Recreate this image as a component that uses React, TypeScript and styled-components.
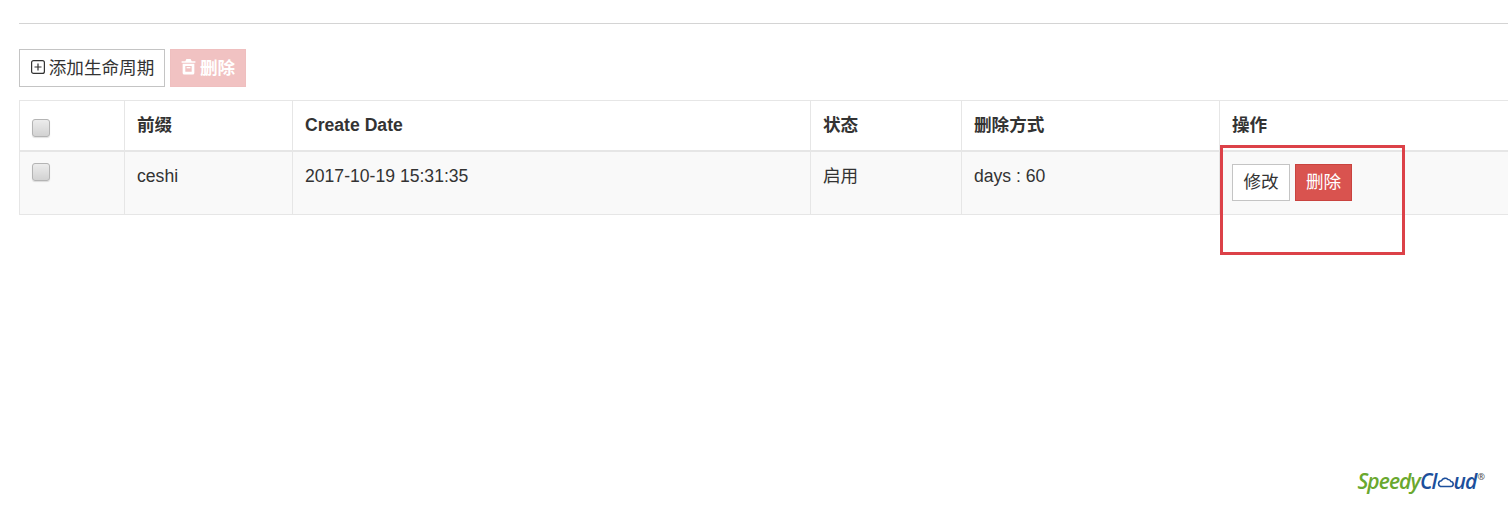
import * as React from 'react';
import styled, {createGlobalStyle} from 'styled-components'

const FONT = `"Helvetica Neue", "Liberation Sans", "Noto Sans CJK SC", sans-serif`

const GlobalStyle = createGlobalStyle`
  html, body {
    margin: 0;
    padding: 0;
    background: #fff;
    overflow: hidden;
  }
  body {
    font-family: ${FONT};
    font-size: 17.6px;
    color: #333;
  }
`
const Page = styled.div`
  position: relative;
  width: 1508px;
  height: 509px;
  overflow: hidden;
  padding: 23px 0 0 19px;
  box-sizing: border-box;
  display: flex;
  flex-direction: column;
`
const Rule = styled.div`
  height: 1px;
  background: #d4d4d4;
  margin-bottom: 25px;
`
const Toolbar = styled.div`
  display: flex;
  gap: 5px;
  height: 38px;
  margin-bottom: 13px;
`
const Button = styled.button`
  display: inline-flex;
  align-items: center;
  justify-content: center;
  gap: 3px;
  box-sizing: border-box;
  padding: 0 0 3px;
  height: 38px;
  border-radius: 0;
  font-family: ${FONT};
  font-size: 17.6px;
`
const AddButton = styled(Button)`
  width: 146px;
  background: #fff;
  color: #333;
  border: 1px solid #c4c4c4;
`
const DisabledButton = styled(Button)`
  width: 76px;
  gap: 4px;
  background: #f1c2c2;
  color: #fff;
  border: 1px solid #efbfbf;
  font-weight: 700;
`
const Table = styled.table`
  border-collapse: collapse;
  table-layout: fixed;
  width: 1600px;
  font-size: 17.6px;
`
const HeadRow = styled.tr`
  height: 50px;
`
const BodyRow = styled.tr`
  height: 64px;
  background: #f9f9f9;
`
const Th = styled.th<{ $w: number; $cjk: boolean }>`
  width: ${props => props.$w}px;
  box-sizing: border-box;
  padding: 0 12px ${props => props.$cjk ? 3 : 0}px;
  text-align: left;
  font-weight: 700;
  border: 1px solid #e6e6e6;
  border-bottom-width: 2px;
  vertical-align: middle;
`
const Td = styled.td`
  box-sizing: border-box;
  padding: 12px;
  line-height: 24px;
  border: 1px solid #e6e6e6;
  vertical-align: top;
`
const Checkbox = styled.span`
  display: block;
  width: 18px;
  height: 18px;
  box-sizing: border-box;
  border: 1px solid #b4b4b4;
  border-radius: 3px;
  background: linear-gradient(#ececec, #d2d2d2);
  box-shadow: 0 1px 1px rgba(0, 0, 0, 0.12);
`
const HeadCheckbox = styled(Checkbox)`
  margin-top: 6px;
`
const RowCheckbox = styled(Checkbox)`
  margin-top: -1px;
`
const RowActions = styled.div`
  display: flex;
  gap: 5px;
`
const EditButton = styled(Button)`
  width: 58px;
  height: 37px;
  background: #fff;
  color: #333;
  border: 1px solid #c4c4c4;
`
const DeleteButton = styled(Button)`
  width: 57px;
  height: 37px;
  background: #d9534f;
  color: #fff;
  border: 1px solid #c9433f;
`
const Highlight = styled.div`
  position: absolute;
  left: 1220px;
  top: 145px;
  width: 185px;
  height: 110px;
  box-sizing: border-box;
  border: 3px solid #dc4148;
`
const Logo = styled.div`
  position: absolute;
  right: 24px;
  bottom: 16px;
  display: flex;
  align-items: center;
  font-family: "Open Sans", sans-serif;
  font-style: italic;
  font-weight: 600;
  font-size: 21px;
  letter-spacing: -0.9px;
  line-height: 24px;
`
const LogoGreen = styled.span`
  color: #6aa82e;
`
const LogoBlue = styled.span`
  color: #1c4f9c;
`
const LogoMark = styled.sup`
  font-size: 9px;
  line-height: 9px;
  color: #555;
  align-self: flex-start;
  margin: 3px 0 0 1px;
  font-style: normal;
`

const PlusSquare = () => (
    <svg width="16" height="16" viewBox="0 0 16 16" fill="none" stroke="#333" strokeWidth="1.2">
        <rect x="1.6" y="1.6" width="12.8" height="12.8" rx="2"/>
        <path d="M8 4.5v7M4.5 8h7"/>
    </svg>
)

const Trash = () => (
    <svg width="15" height="17" viewBox="0 0 14 16" fill="#fff">
        <path d="M5 1h4l1 2h3.5v1.5H.5V3H4z"/>
        <path fillRule="evenodd" d="M1.5 5.5h11V14a1.5 1.5 0 0 1-1.5 1.5H3A1.5 1.5 0 0 1 1.5 14zM4 7.5V13h6V7.5z"/>
        <path d="M5.2 8.5h3.6v1.2H5.2z"/>
    </svg>
)

const CloudO = () => (
    <svg width="17" height="13" viewBox="0 0 17 13" fill="none" stroke="#1c4f9c" strokeWidth="1.6" strokeLinejoin="round">
        <path d="M3.5 11.5h10a2.5 2.5 0 0 0 .4-5 3 3 0 0 0-2.9-2 4 4 0 0 0-6.5 1.2 3 3 0 0 0-1 5.8z"/>
    </svg>
)

const columns = [
    {title: '', width: 105},
    {title: '前缀', width: 168},
    {title: 'Create Date', width: 518},
    {title: '状态', width: 151},
    {title: '删除方式', width: 258},
    {title: '操作', width: 400},
]

export default function App() {
    return (
        <>
            <GlobalStyle/>
            <Page>
                <Rule/>
                <Toolbar>
                    <AddButton><PlusSquare/>添加生命周期</AddButton>
                    <DisabledButton><Trash/>删除</DisabledButton>
                </Toolbar>
                <Table>
                    <thead>
                        <HeadRow>
                            {columns.map((col, i) => (
                                <Th key={i} $w={col.width} $cjk={i > 0 && col.title !== 'Create Date'}>
                                    {i === 0 ? <HeadCheckbox/> : col.title}
                                </Th>
                            ))}
                        </HeadRow>
                    </thead>
                    <tbody>
                        <BodyRow>
                            <Td><RowCheckbox/></Td>
                            <Td>ceshi</Td>
                            <Td>2017-10-19 15:31:35</Td>
                            <Td>启用</Td>
                            <Td>days : 60</Td>
                            <Td>
                                <RowActions>
                                    <EditButton>修改</EditButton>
                                    <DeleteButton>删除</DeleteButton>
                                </RowActions>
                            </Td>
                        </BodyRow>
                    </tbody>
                </Table>
                <Highlight/>
                <Logo>
                    <LogoGreen>Speedy</LogoGreen>
                    <LogoBlue>Cl</LogoBlue>
                    <CloudO/>
                    <LogoBlue>ud</LogoBlue>
                    <LogoMark>®</LogoMark>
                </Logo>
            </Page>
        </>
    )
}
